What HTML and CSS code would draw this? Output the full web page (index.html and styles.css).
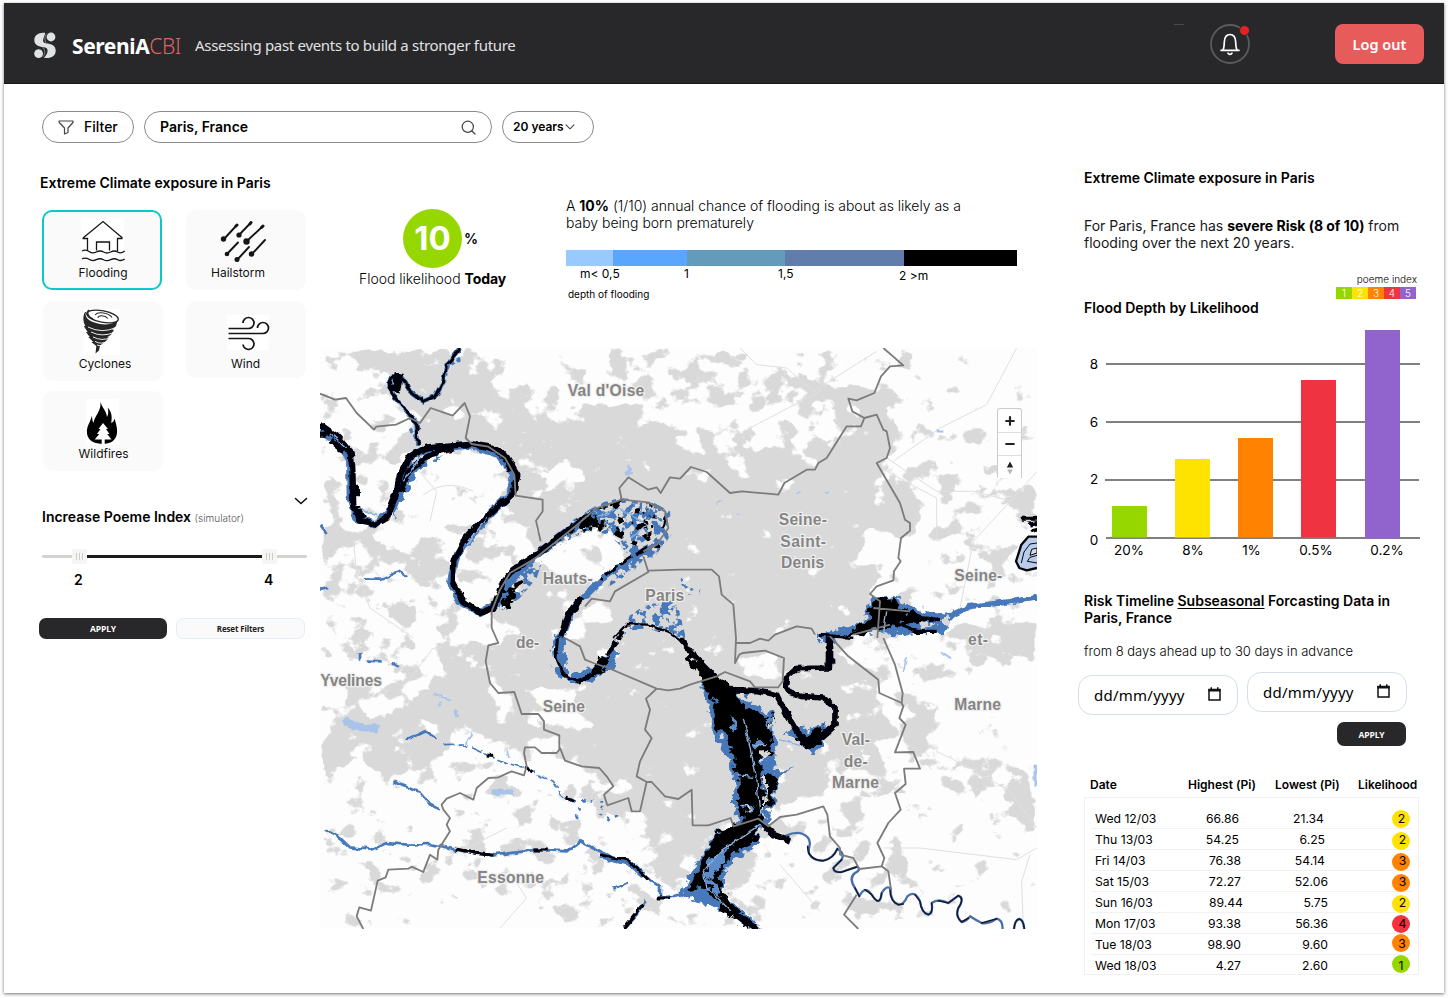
FILE: index.html
```html
<!DOCTYPE html>
<html lang="en">
<head>
<meta charset="utf-8">
<title>SereniA CBI</title>
<link rel="stylesheet" href="styles.css">
</head>
<body>
<div class="frame">
  <header class="topbar">
    <svg class="logo" width="22" height="27" viewBox="0 0 22 27">
      <g fill="#dfe3e2">
        <path d="M11 .8C5 0 .3 3 .3 8c0 5 4 6.500 9.700 7.200 3 .4 4 2 3.500 4.500-.4 2.300-2 4.300-3.500 6 6 1 11.700-1 11.700-7 0-5-4-7-10-7.500-3-.3-3-3-2-5.500.6-2 1.600-3.500 1.300-4.900z"/>
        <circle cx="17" cy="5" r="4.400"/>
        <circle cx="4.600" cy="21.600" r="4.400"/>
      </g>
      <path d="M13 1.500C9.500 5 11 10 13 12M8.500 25c4-4 2-7.500 0-10" fill="none" stroke="#85898a" stroke-width=".9"/>
    </svg>
    <div class="brand">SereniA<span class="brand-sub">CBI</span></div>
    <div class="tagline">Assessing past events to build a stronger future</div>
    <span class="arc"></span>
    <div class="bell">
      <svg width="40" height="40" viewBox="0 0 40 40" fill="none">
        <circle cx="20" cy="20" r="19" stroke="#5b5b5d" stroke-width="1.800"/>
        <path d="M11 26.300h18M13 26c1-2 1.200-4 1.300-8 .2-4.500 2.200-7.500 5.700-7.500s5.500 3 5.700 7.500c.1 4 .3 6 1.300 8" stroke="#fff" stroke-width="1.700" stroke-linecap="round"/>
        <path d="M18 29.200c.8 1.600 3.200 1.600 4 0" stroke="#fff" stroke-width="1.700" stroke-linecap="round"/>
      </svg>
      <span class="dot"></span>
    </div>
    <button class="logout">Log out</button>
  </header>

  <div class="toolbar">
    <div class="pill pill-filter">
      <svg width="16" height="15" viewBox="0 0 16 15" fill="none" stroke="#444" stroke-width="1.200" stroke-linejoin="round"><path d="M1 1h14v1.500L10 8v4.500L6.500 14V8L1.200 2.500z"/></svg>
      <span>Filter</span>
    </div>
    <div class="pill pill-search">
      <span>Paris, France</span>
      <svg width="15" height="15" viewBox="0 0 15 15" fill="none" stroke="#444" stroke-width="1.200" stroke-linecap="round"><circle cx="6.800" cy="6.800" r="5.600"/><path d="M11 11l3 3"/></svg>
    </div>
    <div class="pill pill-years">
      <span>20 years</span>
      <svg width="10" height="6" viewBox="0 0 10 6" fill="none" stroke="#444" stroke-width="1.100" stroke-linecap="round"><path d="M1 .8l4 4 4-4"/></svg>
    </div>
  </div>

  <main class="content">
    <aside class="left">
      <h2 class="title">Extreme Climate exposure in Paris</h2>
      <div class="cards">
        <div class="card card-active">
          <svg width="120" height="53" viewBox="0 0 120 53" fill="none" stroke="#151515" stroke-width="1.300">
            <rect x="39" y="9" width="43" height="42" fill="#fff" stroke="none"/>
            <path d="M41 28l20-16.500L80.500 28M40.500 28.500h5v12.500M80.500 28.500h-5v12.500M54.500 40.500v-8.500h13v8.500"/>
            <path d="M40 41q3.500-2 7 .5t7.300.5 7.200 0 7.200 0 7 0 7-1"/>
            <path d="M40 49q3.500-2 7 .3t7.300.4 7.200 0 7.200 0 7 0 7-.7"/>
          </svg>
          <span>Flooding</span>
        </div>
        <div class="card card-hail">
          <svg width="120" height="54" viewBox="0 0 120 54" stroke="#151515" fill="#151515" stroke-linecap="round">
            <path d="M38 29L50 16M53 25l12-12.500M61 31l16-15M41 44l11-11.500M51 50l12-13M66 44l13-14" stroke-width="1.900"/>
            <path d="M50 16l1-1M75.500 17.500l1.500-1.500M64 14l1-1.500" stroke-width="3"/>
            <g stroke="none"><circle cx="37.500" cy="29" r="2.700"/><circle cx="53" cy="25" r="2.600"/><circle cx="60.500" cy="31.500" r="3.200"/><circle cx="41" cy="44" r="2.300"/><circle cx="51" cy="49.500" r="2.500"/><circle cx="65.500" cy="44" r="2.700"/></g>
          </svg>
          <span>Hailstorm</span>
        </div>
        <div class="card card-cyclone">
          <svg width="120" height="54" viewBox="0 0 120 54" fill="none">
            <rect x="40" y="8" width="37" height="46" fill="#fff"/>
            <path d="M43 11c-2 5 3 10 14 12 9 1.500 16-1 18-5l-2 7-4 4 2-.3-3 5-4 2.500 2 .2-3 3.500-6 4.500-1 5-3.500 3 .8-7.500-5-4 2 .2-5-5 1.500-.2-4-5 2 .3-4-6 1.500-.3c-2-4-3-9-.3-13.900z" fill="#262626"/>
            <ellipse cx="59.500" cy="15.500" rx="16" ry="5.700" transform="rotate(11 59.500 15.500)" fill="#fff" stroke="#262626" stroke-width="1.400"/>
            <path d="M46 9c-3 3-1 7 4 9" stroke="#262626" stroke-width="1.600"/>
            <path d="M52 14c3-4 14-2 17 2.500M55 17c0-3 7-3 10 .5" stroke="#262626" stroke-width="1.100"/>
            <path d="M45 26q14 7 28 .5M48 31q11 5.500 23 .5M50 36q9 4.500 18 .5M52 40.500q7 3.500 13-.5M54 44q4 2 8-.5" stroke="#fff" stroke-width=".9"/>
          </svg>
          <span>Cyclones</span>
        </div>
        <div class="card card-wind">
          <svg width="120" height="54" viewBox="0 0 120 54" fill="none" stroke="#151515" stroke-width="1.700">
            <rect x="42" y="14" width="42" height="35" fill="#fff" stroke="none"/>
            <path d="M43.500 27.500H63.500a5.500 5.500 0 1 0-5.500-5.500M43.500 32.500H78a5.500 5.500 0 1 0-5.500-5.500M43.500 37.500H63a5.500 5.500 0 1 1-5 6"/>
          </svg>
          <span>Wind</span>
        </div>
        <div class="card card-fire">
          <svg width="120" height="54" viewBox="0 0 120 54">
            <rect x="43" y="8" width="33" height="46" fill="#fff"/>
            <path d="M57.500 10.500c1 6 6 9 6.500 15.500 1.500-2.500 1.500-6 .7-9.500 3.500 4 4.800 8 3.500 15.500 2-.7 3-2.500 3.400-4.500C74 36 76.500 44 70 50c-3 2.500-7 2.700-10.500 2.700-7 0-14-2-15.500-10-.7-5 1-8.500 3-12.500l2-5.500c.2 3.500.3 5.500 1.500 7C51.500 25 58.500 20 57.500 10.500z" fill="#000"/>
            <path d="M60 32l5 6h-2l3.500 5h-2.300l4.300 5.500h-6.800v4.500h-3v-4.500h-7l4.500-5.500h-2.200l3.500-5h-2z" fill="#fff"/>
          </svg>
          <span>Wildfires</span>
        </div>
      </div>

      <div class="collapse"><svg width="14" height="8" viewBox="0 0 14 8" fill="none" stroke="#111" stroke-width="1.600" stroke-linecap="round"><path d="M1.500 1.500L7 6.500l5.500-5"/></svg></div>
      <h2 class="title sim-title">Increase Poeme Index <small>(simulator)</small></h2>
      <svg class="slider" width="265" height="16" viewBox="0 0 265 16">
        <path d="M1.500 8.500h262" stroke="#d4d2d0" stroke-width="3" stroke-linecap="round"/>
        <path d="M44 8.500h176" stroke="#1b1b1b" stroke-width="3"/>
        <g fill="#f5f5f4"><rect x="30" y="1" width="15" height="15" rx="2"/><rect x="220" y="1" width="15" height="15" rx="2"/></g>
        <path d="M34.500 5v7M37.500 5v7M40.500 5v7M224.500 5v7M227.500 5v7M230.500 5v7" stroke="#cfcdcb" stroke-width="1"/>
      </svg>
      <div class="slider-values"><span>2</span><span>4</span></div>
      <div class="buttons"><button class="btn-dark">APPLY</button><button class="btn-light">Reset Filters</button></div>
    </aside>

    <section class="middle">
      <div class="stats">
        <div class="likelihood">
          <div class="score"><span class="score-circle">10</span><span class="score-unit">%</span></div>
          <p>Flood likelihood <b>Today</b></p>
        </div>
        <div class="depth">
          <p class="depth-text">A <b>10%</b> (1/10) annual chance of flooding is about as likely as a<br>baby being born prematurely</p>
          <div class="scale"><i class="s1"></i><i class="s2"></i><i class="s3"></i><i class="s4"></i><i class="s5"></i></div>
          <div class="scale-labels"><span>m&lt; 0,5</span><span>1</span><span>1,5</span><span class="low">2 &gt;m</span></div>
          <p class="depth-note">depth of flooding</p>
        </div>
      </div>
      <div class="map">
        <svg width="717" height="581" viewBox="0 0 2151 1743">
          <defs>
            <filter id="land" x="0" y="0" width="2151" height="1743" filterUnits="userSpaceOnUse" color-interpolation-filters="sRGB">
              <feColorMatrix in="SourceGraphic" type="matrix" values="0 0 0 0 0  0 0 0 0 0  0 0 0 0 0  1 0 0 0 0"/>
              <feGaussianBlur stdDeviation="12" result="density"/>
              <feTurbulence type="fractalNoise" baseFrequency="0.014 0.017" numOctaves="5" seed="8" result="noise"/>
              <feComposite in="density" in2="noise" operator="arithmetic" k1="0" k2="1" k3="1" k4="-0.5"/>
              <feColorMatrix type="matrix" values="0 0 0 0 .85  0 0 0 0 .85  0 0 0 0 .85  0 0 0 12 -5.600"/>
            </filter>
            <filter id="rough" x="-100" y="-100" width="2351" height="1943" filterUnits="userSpaceOnUse">
              <feTurbulence type="fractalNoise" baseFrequency="0.04" numOctaves="2" seed="3"/>
              <feDisplacementMap in="SourceGraphic" scale="17" xChannelSelector="R" yChannelSelector="G"/>
              <feGaussianBlur stdDeviation="1.300"/>
            </filter>
            <filter id="ragged" x="-100" y="-100" width="2351" height="1943" filterUnits="userSpaceOnUse">
              <feTurbulence type="fractalNoise" baseFrequency="0.040" numOctaves="3" seed="11"/>
              <feDisplacementMap in="SourceGraphic" scale="44" xChannelSelector="R" yChannelSelector="G"/>
              <feGaussianBlur stdDeviation="1.300"/>
            </filter>
            <filter id="speckle" x="0" y="0" width="2151" height="1743" filterUnits="userSpaceOnUse">
              <feTurbulence type="fractalNoise" baseFrequency="0.045" numOctaves="3" seed="21"/>
              <feColorMatrix type="matrix" values="0 0 0 0 0  0 0 0 0 0  0 0 0 0 0  0 0 0 14 -6.900"/>
              <feComposite in="SourceGraphic" operator="in"/>
            </filter>
            <filter id="speckle-dark" x="0" y="0" width="2151" height="1743" filterUnits="userSpaceOnUse">
              <feTurbulence type="fractalNoise" baseFrequency="0.035" numOctaves="3" seed="44"/>
              <feColorMatrix type="matrix" values="0 0 0 0 0  0 0 0 0 0  0 0 0 0 0  0 0 0 16 -9"/>
              <feComposite in="SourceGraphic" operator="in"/>
            </filter>
          </defs>
          <rect width="2151" height="1743" fill="#fdfdfd"/>
          <g filter="url(#land)">
            <rect width="2151" height="1743" fill="#686868"/>
            <g fill="#b0b0b0">
              <path d="M100 0H480L520 130 700 190 900 160 1090 190 1400 330 1560 240 1530 130 1700 130 1740 280 1690 345 1760 520 1740 640 1650 740 1700 860 1560 900 1700 1060 1640 1230 1500 1320 1330 1400 1280 1620 1060 1600 950 1400 740 1340 720 1130 600 1060 510 990 540 860 640 600 560 470 500 540 420 560 380 700 300 640 200 700 180 640 340 580 280 330 220 260 300 200 160 100z"/>
              <path d="M40 1090L200 1100 330 1000 440 900 500 900 520 1040 640 1180 600 1200 420 1130 330 1230 240 1290 140 1250 0 1250zM0 580L140 540 200 620 60 640zM1900 840L2151 820V950L2000 930zM1500 60H1560V150H1480zM1340 70L1440 80 1420 170 1340 160zM1700 390L1850 480 1790 540 1640 490zM2080 430L2151 420V500L2060 480zM1760 1040L1850 1100 1780 1240 1740 1180zM1920 1210L2040 1200 2010 1310 1950 1280zM1690 1500L1840 1510 1800 1600 1740 1590zM2030 1300L2151 1320V1430L2070 1390z"/>
            </g>
            <g fill="#c8c8c8"><path d="M700 200L880 300 1080 420 1250 450 1400 440 1540 330 1600 420 1720 520 1600 640 1560 800 1400 900 1560 950 1560 1080 1400 1180 1200 980 1020 900 900 780 1000 680 700 620 860 420 800 380z"/><path d="M1000 1050L1180 1060 1230 1280 1150 1420 980 1300zM640 860L730 900 760 1020 850 980 990 1060 960 1240 840 1240 640 1000z"/></g>
            <g fill="#484848">
              <path d="M300 320L440 310 560 350 560 430 460 520 380 580 300 600 250 540 280 460zM640 640L720 570 860 560 920 620 860 670 750 710zM770 840L790 780 880 770 860 830zM640 1020L760 1050 820 1130 700 1130zM720 1240L830 1270 850 1320 760 1350zM1250 920L1370 910 1370 1000 1270 990zM1640 540L1760 560 1900 700 1840 760 1680 700 1620 640zM1260 1610L1400 1560 1520 1743H1330zM1560 0H1670L1600 120zM1800 0H2151V380L1850 280 1740 100zM1850 980L2151 960V1280L1900 1200zM1780 1260L2151 1500V1743H1840L1700 1400zM0 1290L400 1330 350 1480 0 1430zM180 1590L700 1650 700 1743H150zM0 60H90L180 200 60 230zM520 0H800L700 110 560 90zM80 860L200 850 150 1000H0z"/>
            </g>
            <g fill="#727272"><path d="M620 300L720 310 790 370 760 440 640 380zM530 540L640 640 500 640 430 600zM110 620L350 680 380 860 250 1020 60 900zM850 0H1300L1340 300 1200 350 1080 300 900 100zM560 180L700 100 800 200 700 240z"/></g>
          </g>
          <g fill="none" stroke="#e0e0e4" stroke-width="3">
            <path d="M1260 0L1310 50 1400 60 1480 130 1670 10M2090 0L2000 170 1860 240 1720 340M2151 370L2080 450 1960 580 1920 780M1700 330L1850 430 1960 430 2080 460M1700 370L1850 450V580M1290 240L1500 130 1520 70M100 570L110 680 150 780 280 870M310 440Q380 390 460 430M280 350L350 430 330 520M1690 1500H1800L2090 1535 2151 1500M1850 1210L1950 1260 2070 1330 2150 1440M2110 1743L2105 1600 2130 1520M1380 1550L1500 1690M560 1560L620 1650 540 1740M340 900L240 1030M440 1500L560 1440"/>
          </g>
          <g fill="none" stroke="#a9c4e8" stroke-width="12" filter="url(#rough)">
            <path d="M75 1115L100 1135 175 1142" stroke-width="24"/><path d="M515 1333H580" stroke-width="18"/><path d="M335 1035L390 1055M365 1060L355 1075M440 1190L455 1150M570 1230L565 1210" stroke-width="5"/><path d="M410 1110L405 1085M915 370L935 380M925 350V375M1870 250L1850 248M2148 1250V1310" stroke-width="9"/>
            <path d="M1190 470L1205 460M1250 500H1260M1430 435H1445M1510 432H1530M1860 910L1890 930M1750 970L1760 930" stroke-width="5"/>
          </g>
          <g fill="none" stroke="#4679ba" filter="url(#rough)" stroke-linejoin="round">
            <g stroke-width="8">
              <path d="M135 692H185L235 670 260 685M260 1175L315 1150 350 1172M220 1300L300 1335 330 1370 360 1385M0 530L20 555M0 725L25 720M120 915V935M140 938L185 940M215 945L235 955M15 1445L60 1470 90 1498 155 1505 200 1485 260 1490 330 1488 400 1503 460 1515 520 1522 650 1505 740 1510 780 1480 840 1510 880 1530 930 1540 980 1590 1020 1615V1650L1080 1640M980 1655L950 1700 910 1743M880 1625L925 1605"/>
            </g>
            <path d="M840 1525L930 1545 970 1580" stroke-width="18"/>
            <path d="M370 1190L430 1188 510 1225 560 1245 620 1262 700 1300 730 1350 760 1360" stroke-width="5" stroke-dasharray="34 9"/>
            <path d="M760 1360H850L840 1400 870 1415 905 1395M770 1410L785 1360M1085 690L1110 740M1090 710L1140 730M1650 830V860" stroke-width="8" stroke-dasharray="8 18"/>
            <path d="M0 248L50 280 90 330 92 450 108 510 165 530 218 480 248 400 273 340 340 300 450 290 540 320 583 380 570 440 475 535 410 620 390 700 420 760 480 795 540 760 575 690 650 620 740 550 830 500" stroke-width="24"/>
            <path d="M985 600L960 615 850 690 760 780 725 870" stroke-width="20"/>
            <path d="M420 0L380 50 370 100 345 145 310 160 270 130 245 85 215 85 205 110 225 150 265 195 290 230 292 290" stroke-width="14"/>
            <path d="M420 30L385 55 375 100M270 245L285 265" stroke-width="10" stroke-dasharray="12 8"/>
            <path d="M2151 750L2040 765 1950 775 1900 800 1860 840 1790 845 1700 815" stroke-width="16"/>
          </g>
          <g filter="url(#speckle)">
            <path fill="#4679ba" d="M690 580L760 515 840 465 900 450 990 458 1050 490 1055 560 1000 630 930 625 870 560 800 548 720 590z"/>
            <path fill="#4679ba" d="M535 795L545 720 590 650 680 600 650 690 600 750z"/>
            <path fill="#4679ba" d="M890 670L940 630 1000 600 940 670 860 720z"/>
            <path fill="#4679ba" d="M910 860L930 800 980 770 1070 755 1100 880 1040 860 980 840 930 850z"/>
          </g>
          <g filter="url(#speckle-dark)">
            <path fill="#000" d="M740 560L830 480 900 455 990 465 1040 510 1020 600 960 600 880 560 800 560z"/>
            <path fill="#000" d="M535 790L550 720 620 690 600 750z"/>
          </g>
          <g filter="url(#ragged)">
            <path fill="#4679ba" d="M1130 950L1240 1030 1360 1100 1368 1240 1375 1310 1340 1440 1250 1450 1240 1270 1180 1140zM1320 1420L1310 1490 1220 1560 1210 1640 1330 1743 1250 1700 1080 1640 1120 1560 1200 1440zM1400 1150L1540 1130 1500 1200 1480 1220zM1660 750L1720 740 1760 770 1870 800 1900 790 1870 855 1780 860 1660 850 1500 880 1500 860 1620 830zM1330 1275L1420 1258 1350 1290zM225 460L270 340 320 310 360 320 290 370 250 460 215 510zM705 850L730 860 745 980 820 960 890 880 885 950 820 1000 760 1010 715 980 700 920z"/>
            <path fill="#d8d8d8" d="M300 320L370 310 280 360zM1860 820L1890 800 1880 840zM1790 822L1850 826 1810 845z"/>
          </g>
          <g filter="url(#ragged)">
            <path fill="#000" d="M1080 880L1110 910 1165 960 1230 1015 1280 1080 1310 1095 1360 1110 1350 1190 1360 1225 1325 1220 1320 1275 1330 1370 1325 1430 1270 1440 1258 1380 1250 1250 1235 1200 1190 1130 1190 1080 1150 1010zM1345 1280L1375 1290 1350 1380 1332 1385 1330 1290zM1320 1420L1310 1470 1240 1520 1210 1550 1200 1620 1250 1690 1310 1743 1220 1700 1160 1620 1100 1630 1130 1570 1200 1440zM1670 750L1720 745 1740 785 1860 815 1700 835 1560 875 1640 820zM770 530L820 500 840 530 790 550zM1420 1170L1530 1135 1500 1185 1470 1205zM545 770L570 730 590 740 560 790z"/>
            <path fill="#000" d="M830 940L870 920 850 975 820 980zM415 735L440 745 430 770z"/>
            <path fill="#5d8cca" d="M1230 1105L1255 1120 1245 1155zM1290 1180H1325L1310 1215zM1270 1370H1300L1290 1400zM1150 1570L1180 1530 1230 1490 1210 1540 1180 1590zM1330 1110H1350V1150zM1190 1640L1150 1590 1165 1575 1210 1650z"/>
            <path fill="#d8d8d8" d="M1320 1210H1345L1335 1240zM1350 1110L1362 1115 1355 1150zM1332 1290H1339L1334 1410 1328 1400zM1278 1370L1288 1375 1285 1400z"/>
          </g>
          <g fill="none" stroke="#050508" filter="url(#rough)" stroke-linejoin="round">
            <path d="M0 230L50 265 92 315 97 360 100 480 125 520 165 530 200 510 225 450 240 380 265 330 320 298 450 288 510 298 560 328 592 380 580 435 475 530 430 580 400 640 398 700 430 760 480 795 520 780 550 700 580 665 640 625 760 535" stroke-width="19"/>
            <path d="M0 260H20M30 280L75 310M108 410V445M110 475L130 510M245 430L265 370 330 320 400 300M560 335L570 370" stroke-width="18"/>
            <path d="M760 535L820 485" stroke-width="8"/><path d="M980 600L910 640 840 695" stroke-width="10" stroke-dasharray="40 14"/>
            <path d="M785 750L745 800 722 870" stroke-width="22"/><path d="M712 870L708 930 730 980 775 1000" stroke-width="9"/>
            <path d="M775 1000L820 980 860 920 900 870 910 850" stroke-width="14" stroke-dasharray="50 9"/>
            <path d="M880 870L920 828 980 830 1040 850 1085 880" stroke-width="7"/><path d="M1080 870L1120 920 1180 980" stroke-width="16"/>
            <path d="M420 0L380 50 370 100 345 145 310 160 270 130 245 85 215 85 205 110 225 150 265 195 290 230 295 290" stroke-width="9"/><path d="M238 75L225 130" stroke-width="28"/>
            <path d="M1530 875L1525 960 1430 962 1402 985 1395 1015 1410 1035 1440 1045 1510 1050 1545 1080 1545 1130 1500 1170 1460 1180 1430 1150 1390 1080 1370 1040 1310 1028 1230 1025" stroke-width="17"/>
            <path d="M1530 870V950" stroke-width="26"/>
            <path d="M1500 862L1600 868M1700 815L1790 850 1850 850M1760 805L1860 815" stroke-width="10"/>
            <path d="M410 1503L460 1515 520 1522M640 1506H680M840 1520L880 1530 930 1540 985 1595M1010 1650H1050M970 1670L910 1743M610 1255L640 1275M740 1350L760 1360M500 1225H520" stroke-width="9"/>
            <path d="M1320 1420L1360 1460 1410 1478" stroke-width="18"/>
            <path d="M1240 1690L1330 1760" stroke-width="18"/>
            <path d="M2105 512H2151M2125 530L2151 525M2130 550L2151 545" stroke-width="12"/>
          </g>
          <g stroke="#08080c" stroke-linejoin="round">
            <path d="M2151 566L2125 566 2104 590 2088 640 2098 660 2120 667 2151 660" fill="#b9cceb" stroke-width="7"/>
            <path d="M2151 585L2130 588 2112 612 2104 645M2151 622L2130 628 2122 640 2151 645" fill="none" stroke-width="3"/>
            <path d="M2151 600L2135 604 2130 622 2151 615z" fill="#d8d8d8" stroke-width="3"/>
          </g>
          <g fill="none" stroke-linejoin="round" stroke-linecap="round">
            <path stroke="#4b6fa6" stroke-width="7" d="M1400 1462Q1440 1445 1463 1468C1480 1485 1460 1500 1468 1518Q1480 1540 1510 1538Q1540 1532 1552 1502Q1575 1515 1565 1535L1540 1560Q1542 1575 1565 1572L1612 1556Q1625 1565 1605 1575Q1585 1590 1605 1620L1618 1645Q1635 1610 1655 1640Q1680 1680 1685 1635Q1700 1610 1712 1622Q1710 1660 1735 1670Q1752 1670 1762 1645Q1785 1625 1800 1660Q1805 1695 1825 1700Q1840 1695 1835 1665Q1855 1650 1885 1665L1915 1643Q1935 1650 1915 1680Q1905 1705 1925 1722Q1940 1720 1950 1705Q1965 1715 1985 1725Q2005 1730 2030 1712Q2048 1715 2048 1743M2082 1743Q2085 1715 2098 1713Q2110 1715 2113 1743"/>
            <path stroke="#111a30" stroke-width="4.500" d="M1463 1495Q1462 1535 1510 1538Q1540 1532 1552 1502M1565 1535L1540 1560Q1542 1575 1565 1572L1612 1556M1605 1620L1618 1645M1635 1625L1655 1640Q1680 1680 1685 1635M1710 1625Q1710 1660 1735 1670L1750 1668M1785 1640L1800 1660Q1805 1695 1825 1700Q1840 1695 1835 1665M1855 1658L1885 1665 1915 1643Q1935 1650 1915 1680Q1905 1705 1925 1722L1945 1710M1985 1725L2030 1712M2082 1743Q2085 1715 2098 1713Q2110 1715 2113 1743"/>
          </g>
          <g fill="none" stroke="#8fb0dd" stroke-width="4" filter="url(#rough)"><path d="M1320 1430L1200 1510 1150 1570 1160 1620 1230 1690M1270 1110L1290 1200 1310 1290 1320 1400M1250 1280L1300 1285M1300 1190H1340M1700 790L1690 860M300 330L250 400M30 255L80 300M130 490L170 500M440 590L500 510M830 510L900 480 980 530 930 570M1380 1175L1440 1190M120 485L165 498"/></g>
          <g fill="none" stroke="#7c7c7c" stroke-width="5.500" stroke-linejoin="round">
            <path d="M0 137L45 155 78 150 110 195 162 245 168 236 228 230 270 210 300 225 332 180 398 203 434 165 450 205 437 270 455 288 505 296 555 330 583 380 587 443 668 455V490L648 518 662 580"/>
            <path d="M515 790V840L535 885 505 892 497 940 510 1005 535 1035 583 1032 605 1098H655L672 1120V1145L718 1162V1205L710 1215H665L645 1198H615L612 1215 620 1255 612 1282 575 1270 535 1288 505 1290 470 1320 460 1355 420 1335 380 1352 365 1370 370 1385 390 1410 380 1430 390 1450 355 1505 352 1535 330 1520 310 1572 275 1556 265 1562 205 1565 197 1588 173 1598 153 1688 118 1678 110 1705 130 1743"/>
            <path d="M720 1200L735 1238 785 1255 838 1260 860 1285 880 1315 852 1340 862 1372 925 1350 935 1390H960L980 1302 950 1285 960 1240 995 1170 975 1145 990 1085 978 1052 1010 1022M980 1302H995L1035 1345 1075 1353 1115 1325 1118 1432H1165L1232 1410 1240 1435 1315 1412 1345 1435 1380 1407 1430 1400 1510 1375 1522 1400 1530 1465 1560 1500V1520L1600 1530 1618 1563 1685 1555 1705 1570 1713 1625M1610 1640L1572 1700 1615 1743"/>
            <path d="M1530 865L1585 925 1675 995 1678 1035 1745 1065M1690 870L1725 950 1748 1035 1745 1065 1750 1075 1738 1110 1757 1130 1725 1213 1780 1212 1800 1262H1752L1757 1308 1725 1335 1742 1385 1705 1425 1672 1485 1693 1530 1685 1555"/>
            <path d="M795 775L815 752 870 760 885 730 985 672 970 625M985 668L1080 665H1175L1197 685 1205 740 1240 770 1248 870 1245 945 1258 920 1268 915 1335 908 1392 930 1388 1000 1375 1018H1305L1290 1000 1215 972 1190 985 1110 1010 1080 1022 1045 1027 1010 1022 865 960 820 945 795 935 780 895 735 870M1248 885H1290L1320 872 1345 878 1365 860 1430 835 1475 842 1485 860M515 790L540 725 570 675 640 635 760 540 830 480 905 455 985 463 1035 490 1045 540 1010 590 970 610"/>
            <path d="M905 455L898 420 925 388 985 425 1010 418 1022 435 1050 388 1080 392 1113 357 1160 372 1230 435 1265 430 1375 440 1393 405 1460 365H1485L1495 345 1520 330 1580 235H1623L1633 210 1597 190 1585 152 1610 157 1663 135 1683 85 1710 55 1750 52 1690 0M1633 210L1670 200 1690 245 1700 250 1710 300 1700 330 1670 345 1740 465 1755 515 1770 525V548L1743 570 1735 630 1742 640 1722 670 1720 697 1670 715 1650 738 1680 760 1672 870M1660 780L1770 790M1600 860L1710 830"/>
          </g>
          <g class="map-labels" transform="translate(0 2)">
            <text x="743" y="143" textLength="230">Val d'Oise</text>
            <text x="1376" y="530" textLength="145">Seine-</text>
            <text x="1381" y="594" textLength="137">Saint-</text>
            <text x="1383" y="658" textLength="130">Denis</text>
            <text x="1903" y="697" textLength="144">Seine-</text>
            <text x="668" y="705" textLength="150">Hauts-</text>
            <text x="976" y="756" textLength="117">Paris</text>
            <text x="588" y="898" textLength="70">de-</text>
            <text x="1944" y="890" textLength="60">et-</text>
            <text x="1" y="1012" textLength="185">Yvelines</text>
            <text x="668" y="1091" textLength="127">Seine</text>
            <text x="1903" y="1084" textLength="140">Marne</text>
            <text x="1565" y="1190" textLength="85">Val-</text>
            <text x="1571" y="1256" textLength="72">de-</text>
            <text x="1536" y="1318" textLength="141">Marne</text>
            <text x="472" y="1603" textLength="200">Essonne</text>
          </g>
        </svg>
        <div class="zoom">
          <span><svg width="10" height="10" viewBox="0 0 10 10" stroke="#222" stroke-width="2.200" stroke-linecap="round"><path d="M5 1.200v7.600M1.200 5h7.600"/></svg></span>
          <span><svg width="10" height="10" viewBox="0 0 10 10" stroke="#222" stroke-width="2.200" stroke-linecap="round"><path d="M1.200 5h7.600"/></svg></span>
          <span><svg width="8" height="14" viewBox="0 0 8 14"><path d="M4 .5L7.200 6.500H.8z" fill="#222"/><path d="M4 13.500L1.200 8.500h5.600z" fill="#b5b5b5"/></svg></span>
        </div>
      </div>
    </section>

    <aside class="right">
      <h2 class="title">Extreme Climate exposure in Paris</h2>
      <p class="risk">For Paris, France has <b>severe Risk (8 of 10)</b> from<br>flooding over the next 20 years.</p>
      <div class="legend">
        <span class="legend-name">poeme index</span>
        <div class="legend-row"><i class="p1">1</i><i class="p2">2</i><i class="p3">3</i><i class="p4">4</i><i class="p5">5</i></div>
      </div>
      <h2 class="title">Flood Depth by Likelihood</h2>
      <svg class="chart" width="340" height="240" viewBox="1084 320 340 240">
        <path d="M1106 364h314M1106 422h314M1105 480h314M1106 538h314" stroke="#808080" stroke-width="2"/>
        <rect x="1112" y="506" width="35" height="31.500" fill="#97d700"/>
        <rect x="1175" y="459" width="35" height="78.500" fill="#ffe300"/>
        <rect x="1238" y="438" width="35" height="99.500" fill="#ff8200"/>
        <rect x="1301" y="380" width="35" height="157.500" fill="#ef3340"/>
        <rect x="1365" y="330" width="35" height="208.500" fill="#9063cd"/>
        <g text-anchor="middle">
          <text x="1094" y="369">8</text><text x="1094" y="427">6</text><text x="1094" y="484">2</text><text x="1094" y="545">0</text>
          <text x="1129" y="555">20%</text><text x="1193" y="555">8%</text><text x="1251.500" y="555">1%</text><text x="1316" y="555">0.5%</text><text x="1387" y="555">0.2%</text>
        </g>
      </svg>
      <h2 class="title timeline">Risk Timeline <u>Subseasonal</u> Forcasting Data in<br>Paris, France</h2>
      <p class="advance">from 8 days ahead up to 30 days in advance</p>
      <div class="dates">
        <div class="date date-from"><span>dd/mm/yyyy</span><svg width="13" height="14" viewBox="0 0 13 14"><path d="M1 2.500h11v10.500H1z" fill="none" stroke="#111" stroke-width="1.500"/><path d="M.5 2h12v2.500H.5zM2.500 .3h1.500v2H2.500zM9 .3h1.500v2H9z" fill="#111"/></svg></div>
        <div class="date"><span>dd/mm/yyyy</span><svg width="13" height="14" viewBox="0 0 13 14"><path d="M1 2.500h11v10.500H1z" fill="none" stroke="#111" stroke-width="1.500"/><path d="M.5 2h12v2.500H.5zM2.500 .3h1.500v2H2.500zM9 .3h1.500v2H9z" fill="#111"/></svg></div>
      </div>
      <button class="btn-dark apply-dates">APPLY</button>
      <div class="thead"><span>Date</span><span>Highest (Pi)</span><span>Lowest (Pi)</span><span>Likelihood</span></div>
      <div class="table">
        <div class="row"><span>Wed 12/03</span><span class="r0">66.86</span><span class="q0">21.34</span><i class="p2 b0">2</i></div>
        <div class="row"><span>Thu 13/03</span><span class="r0">54.25</span><span class="q1">6.25</span><i class="p2 b1">2</i></div>
        <div class="row"><span>Fri 14/03</span><span class="r1">76.38</span><span class="q1">54.14</span><i class="p3 b1">3</i></div>
        <div class="row"><span>Sat 15/03</span><span class="r1">72.27</span><span class="q2">52.06</span><i class="p3 b1">3</i></div>
        <div class="row"><span>Sun 16/03</span><span class="r2">89.44</span><span class="q2">5.75</span><i class="p2 b1">2</i></div>
        <div class="row"><span>Mon 17/03</span><span class="r1">93.38</span><span class="q2">56.36</span><i class="p4 b2">4</i></div>
        <div class="row"><span>Tue 18/03</span><span class="r1">98.90</span><span class="q2">9.60</span><i class="p3 b3">3</i></div>
        <div class="row"><span>Wed 18/03</span><span class="r1">4.27</span><span class="q2">2.60</span><i class="p1 b4">1</i></div>
      </div>
    </aside>
  </main>
</div>
</body>
</html>
```

FILE: styles.css
```css
* { box-sizing: border-box; }
body { margin: 0; width: 1448px; height: 998px; padding: 3px 4px; overflow: hidden; background: #fdfdfd; font-family: Inter, "Liberation Sans", sans-serif; font-size: 14px; line-height: 17px; color: #000; }
h2, p { margin: 0; }
svg { display: block; flex: none; }
button { border: 0; padding: 0; font-family: inherit; }
.frame { width: 1440px; height: 990px; background: #fff; box-shadow: 0 1px 3px rgba(0,0,0,.55); }
.topbar { display: flex; align-items: center; height: 81px; background: #28282b; border-bottom: 1px solid #161618; padding: 2px 20px 0 30px; font-family: "Noto Sans", sans-serif; }
.logo { margin-top: 3px; }
.brand { margin: 4px 0 0 16px; width: 123px; font-size: 21px; font-weight: 700; line-height: 28px; color: #fff; white-space: nowrap; letter-spacing: -.4px; }
.brand-sub { font-weight: 300; color: #dc6562; letter-spacing: -.4px; }
.tagline { margin-top: 2px; width: 340px; font-size: 15px; line-height: 22px; color: #e1e1e1; letter-spacing: -.31px; white-space: nowrap; }
.arc { width: 10px; height: 1px; margin: -40px 0 0 639px; background: #4a4a4c; }
.bell { position: relative; margin-left: 26px; width: 40px; height: 40px; }
.dot { position: absolute; left: 29px; top: 1px; width: 11px; height: 11px; border-radius: 50%; background: #e02424; border: 1px solid #28282b; }
.logout { margin-left: auto; width: 89px; height: 40px; border-radius: 8px; background: #e85b5b; color: #fff; font-size: 14.500px; font-weight: 600; }
.toolbar { display: flex; gap: 10px; padding: 27px 0 0 38px; font-weight: 600; line-height: 16px; }
.pill { display: flex; align-items: center; height: 32px; border: 1px solid #8b8b8b; border-radius: 16px; }
.pill span { margin-top: -1px; }
.pill-filter { width: 92px; padding-left: 15px; gap: 10px; font-weight: 500; }
.pill-search { width: 348px; padding: 0 15px; justify-content: space-between; }
.pill-years { width: 92px; padding-left: 10px; gap: 1px; font-size: 12px; }
.content { display: grid; grid-template-columns: 316px 717px 407px; }
.title { font-size: 14px; line-height: 17px; font-weight: 600; white-space: nowrap; }
.left { padding: 31px 0 0 36px; }
.cards { display: grid; grid-template-columns: 120px 120px; grid-template-rows: 81px 80px 80px; gap: 10px 24px; margin: 19px 0 0 2px; align-items: start; }
.card { display: flex; flex-direction: column; align-items: center; width: 120px; height: 80px; border-radius: 10px; background: #fafafa; font-size: 12px; color: #111; }
.card-active { border: 2px solid #0cc8c8; }
.card-active svg { margin: -2px -2px 1px; }
.card-active span { padding-left: 2px; }
.card-hail span { margin-right: 16px; }
.card-cyclone, .card-fire { margin-left: 1px; }
.card-cyclone span { padding-left: 4px; }
.card-fire span { padding-left: 1px; }
.card-wind { height: 77px; }
.card-wind svg { margin-left: -2px; }
.card-wind span { margin-right: 1px; }
.collapse { display: flex; justify-content: flex-end; margin-top: 26px; width: 268px; }
.sim-title { margin: 3px 0 0 2px; }
.sim-title small { font-size: 10px; font-weight: 300; color: #555; }
.slider { margin: 21px 0 0 2px; }
.slider-values { display: grid; grid-template-columns: 190px 40px; margin: 7px 0 0 34px; font-weight: 600; }
.buttons { display: flex; gap: 9px; margin: 30px 0 0 -1px; }
.btn-dark { width: 128px; height: 21px; border-radius: 7px; background: #28282b; color: #fff; font: 700 8.500px "Open Sans", sans-serif; letter-spacing: -.1px; }
.btn-light { width: 129px; height: 21px; border-radius: 7px; background: #fafafa; border: 1px solid #e6edf3; color: #222; font: 700 8px "Open Sans", sans-serif; letter-spacing: -.15px; }
.stats { display: grid; grid-template-columns: 246px 451px; height: 205px; padding-top: 54px; }
.likelihood { padding: 12px 0 0 39px; font-weight: 300; white-space: nowrap; letter-spacing: -.03px; }
.likelihood b, .depth-text b { font-weight: 700; }
.score { display: flex; align-items: center; gap: 2px; padding-left: 44px; height: 59px; }
.score-circle { width: 59px; height: 59px; border-radius: 50%; background: #97d700; color: #fff; font-size: 33px; font-weight: 700; line-height: 59px; text-align: center; }
.score-unit { font-weight: 600; }
.likelihood p { margin-top: 2px; }
.depth-text { font-weight: 300; white-space: nowrap; letter-spacing: -.015px; }
.scale { display: flex; height: 16px; margin-top: 19px; }
.s1 { width: 47px; background: #99caff; }
.s2 { width: 74px; background: #59a6ff; }
.s3 { width: 98px; background: #649bbb; }
.s4 { width: 119px; background: #607dab; }
.s5 { width: 113px; background: #000; }
.scale-labels { display: grid; grid-template-columns: 104px 94px 121px 60px; padding-left: 14px; font-size: 12px; margin-top: -1px; }
.scale-labels .low { padding-top: 2px; margin-bottom: -1px; }
.depth-note { margin: 3px 0 0 2px; font-size: 10px; }
.map { position: relative; width: 717px; height: 581px; overflow: hidden; }
.map-labels { font: 700 47px "Liberation Sans", Arial, sans-serif; fill: #858585; stroke: #efefef; stroke-width: 7px; paint-order: stroke; }
.zoom { position: absolute; left: 677px; top: 60px; width: 25px; height: 70px; padding-top: 1px; background: #fff; border: 1px solid #ccc; border-bottom: 0; border-radius: 3px 3px 0 0; }
.zoom span { display: flex; align-items: center; justify-content: center; height: 23px; border-bottom: 1px solid #ddd; }
.zoom span:last-child { border-bottom: 0; }
.right { padding: 26px 0 0 47px; }
.risk { margin-top: 31px; white-space: nowrap; color: #181818; }
.risk b { font-weight: 700; color: #000; letter-spacing: -.02px; }
.legend { display: flex; flex-direction: column; align-items: flex-end; width: 333px; margin-top: 21px; height: 27px; font-size: 10px; font-weight: 300; }
.legend-name { line-height: 14px; height: 15px; }
.legend-row { display: flex; margin-right: 1px; }
.legend-row i { width: 16px; height: 12px; font-style: normal; font-size: 10px; line-height: 12px; text-align: center; color: #fff; }
.p1 { background: #97d700; }
.p2 { background: #ffe300; }
.p3 { background: #ff8200; }
.p4 { background: #ef3340; }
.p5 { background: #9063cd; }
.legend + .title { margin-top: 0; }
.chart { margin-top: 4px; font-size: 13.500px; }
.timeline { margin-top: 32px; }
.timeline u { text-underline-offset: 2px; text-decoration-thickness: 1px; }
.advance { margin-top: 17px; font-size: 13px; font-weight: 300; }
.dates { display: flex; gap: 9px; margin: 12px 0 0 -6px; }
.date { display: flex; align-items: center; justify-content: space-between; width: 160px; height: 40px; padding: 0 16px 0 15px; border: 1px solid #d5deea; border-radius: 14px; font: 15px "Noto Sans", sans-serif; letter-spacing: .25px; }
.date-from { margin-top: 3px; }
.date svg { margin-top: -2px; }
.apply-dates { display: block; width: 69px; height: 24px; margin: 7px 0 0 253px; }
.thead { display: grid; grid-template-columns: 98px 87px 83px 70px; margin: 30px 0 0 6px; font-size: 12px; font-weight: 600; white-space: nowrap; }
.table { width: 335px; height: 178px; margin-top: 4px; padding: 10px 6px 0; border: 1px solid #f2f2f2; font-size: 12.200px; }
.row { display: grid; grid-template-columns: 90px 54px 85px 18px; height: 21px; padding-left: 4px; border-bottom: 1px solid #f2f2f2; align-items: center; white-space: nowrap; }
.row:last-child { border-bottom: 0; }
.row span:not(:first-child) { text-align: right; }
.row i { width: 18px; height: 18px; margin-left: 68px; border-radius: 50%; font-style: normal; line-height: 18px; text-align: center; }
.row .r1 { margin-right: -2px; }
.row .r2 { margin-right: -4px; }
.row .q1 { margin-right: -1px; }
.row .q2 { margin-right: -4px; }
.row .b0 { padding-left: 1px; margin-top: 1px; }
.row .b1 { margin-top: 3px; line-height: 16px; padding-left: 3px; }
.row .b2 { padding-left: 3px; margin-top: 1px; }
.row .b3 { margin-top: -2px; line-height: 20px; padding-left: 2px; }
.row .b4 { margin-top: -4px; line-height: 22px; }
```
